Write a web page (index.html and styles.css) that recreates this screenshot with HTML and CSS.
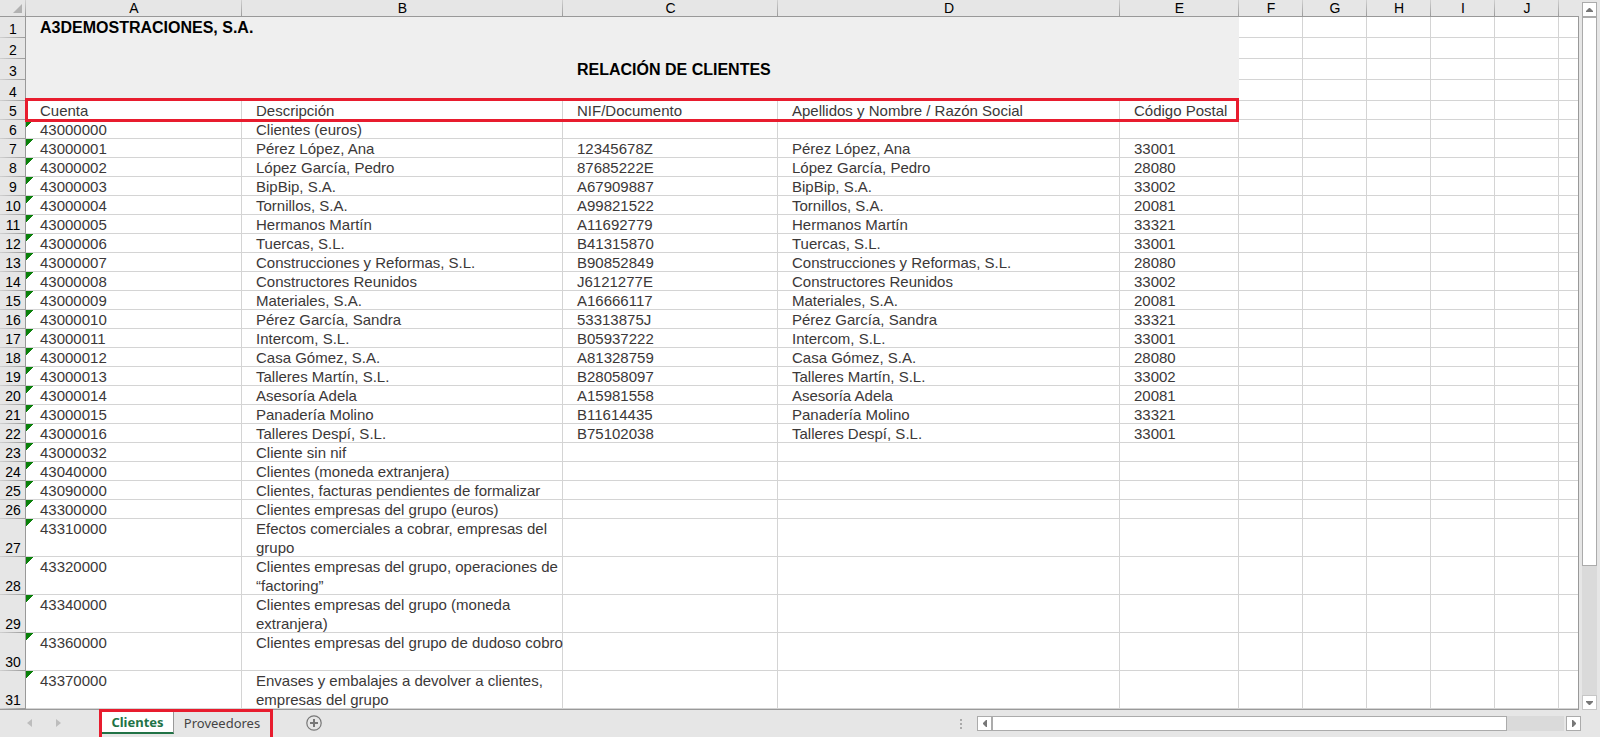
FILE: index.html
```html
<!DOCTYPE html>
<html lang="es">
<head>
<meta charset="utf-8">
<title>Relación de clientes</title>
<link rel="stylesheet" href="styles.css">
</head>
<body>
<main class="workspace">
  <div class="sheet">
    <table class="grid">
      <colgroup>
        <col class="col-num"><col class="col-a"><col class="col-b"><col class="col-c"><col class="col-d"><col class="col-e">
        <col class="col-s"><col class="col-s"><col class="col-s"><col class="col-s"><col class="col-s"><col>
      </colgroup>
      <thead>
        <tr>
          <th class="corner"><svg width="9" height="9" viewBox="0 0 9 9"><path d="M9 0V9H0Z" fill="#b2b2b2"/></svg></th>
          <th>A</th><th>B</th><th>C</th><th>D</th><th>E</th><th>F</th><th>G</th><th>H</th><th>I</th><th>J</th><th class="rest"></th>
        </tr>
      </thead>
      <tbody id="rows"></tbody>
    </table>
  </div>
  <div class="vscroll">
    <button class="arrow" aria-label="Subir"><svg width="7" height="4" viewBox="0 0 7 4"><path d="M3 0H4L7 3V4H0V3Z" fill="#777"/></svg></button>
    <div class="vtrack"><div class="vthumb"></div></div>
    <button class="arrow arrow-down" aria-label="Bajar"><svg width="7" height="4" viewBox="0 0 7 4"><path d="M0 0H7V1L4 4H3L0 1Z" fill="#777"/></svg></button>
  </div>
</main>
<footer class="bar">
  <div class="nav">
    <button class="plain" aria-label="Hoja anterior"><svg width="5" height="8" viewBox="0 0 5 8"><path d="M5 0V8L0 4Z" fill="#bdbdbd"/></svg></button>
    <button class="plain" aria-label="Hoja siguiente"><svg width="5" height="8" viewBox="0 0 5 8"><path d="M0 0V8L5 4Z" fill="#bdbdbd"/></svg></button>
  </div>
  <div class="tabs">
    <button class="tab active">Clientes</button>
    <button class="tab">Proveedores</button>
  </div>
  <button class="plain add" aria-label="Hoja nueva"><svg width="16" height="16" viewBox="0 0 16 16"><circle cx="8" cy="8" r="7.2" fill="none" stroke="#777" stroke-width="1.2"/><path d="M4 8H12M8 4V12" stroke="#777" stroke-width="2"/></svg></button>
  <div class="hscroll">
    <svg class="dots" width="2" height="10" viewBox="0 0 2 10"><path d="M0 0H2V2H0ZM0 4H2V6H0ZM0 8H2V10H0Z" fill="#aaa"/></svg>
    <button class="arrow" aria-label="Izquierda"><svg width="4" height="7" viewBox="0 0 4 7"><path d="M4 0V7H3L0 4V3L3 0Z" fill="#777"/></svg></button>
    <div class="htrack"><div class="hthumb"></div></div>
    <button class="arrow arrow-right" aria-label="Derecha"><svg width="4" height="7" viewBox="0 0 4 7"><path d="M0 0V7H1L4 4V3L1 0Z" fill="#777"/></svg></button>
  </div>
</footer>
<script src="rows.js"></script>
</body>
</html>
```
FILE: styles.css
```css
*, *::after { box-sizing: border-box; }
body {
  margin: 0;
  min-height: 100vh;
  display: flex;
  flex-direction: column;
  background: #e6e6e6;
  font-family: "Liberation Sans", Arial, sans-serif;
  overflow: hidden;
}
button { padding: 0; margin: 0; border: 0; background: none; font: inherit; }
svg { display: block; }

.workspace { flex: 1; display: flex; }
.sheet { flex: 1; min-width: 0; border-bottom: 1px solid #999; }

/* cell grid */
.grid { width: 100%; table-layout: fixed; border-collapse: separate; border-spacing: 0; }
.col-num { width: 26px; }
.col-a { width: 216px; }
.col-b { width: 321px; }
.col-c { width: 215px; }
.col-d { width: 342px; }
.col-e { width: 119px; }
.col-s { width: 64px; }

th { padding: 0; font-weight: 400; font-size: 14px; color: #000; }
thead th {
  height: 17px;
  line-height: 16px;
  vertical-align: top;
  background:
    linear-gradient(#999, #999) bottom / 100% 1px no-repeat,
    linear-gradient(#d0d0d0, #999) right / 1px 100% no-repeat,
    #e6e6e6;
}
thead th.rest { background: linear-gradient(#999, #999) bottom / 100% 1px no-repeat, #e6e6e6; }
.corner svg { margin: 4px 0 0 13px; }
tbody th {
  vertical-align: bottom;
  line-height: 17px;
  background:
    linear-gradient(#999, #999) right / 1px 100% no-repeat,
    linear-gradient(90deg, #d0d0d0, #999) bottom / 100% 1px no-repeat,
    #e6e6e6;
}
td {
  height: 19px;
  padding: 0 0 0 14px;
  vertical-align: top;
  font-size: 15px;
  line-height: 19px;
  color: #3b3838;
  background: #fff;
  box-shadow: inset -1px -1px #d4d4d4;
}
td:last-child { box-shadow: inset -1px 0 #999, inset 0 -1px #d4d4d4; }
.tall td { height: 38px; }
.single td { white-space: nowrap; }
.title td { height: 21px; line-height: 21px; }
.title td.band {
  background: #efefef;
  box-shadow: none;
  font-size: 16px;
  font-weight: 700;
  color: #000;
  white-space: nowrap;
}
td.flag { background: linear-gradient(135deg, #0a800a 5px, #fff 5px); }

/* frame around the field names, columns A to E */
.fields th { position: relative; }
.fields th::after {
  content: "";
  position: absolute;
  top: -3px;
  bottom: -2px;
  left: 25px;
  width: 1214px;
  border: 3px solid #e81c2e;
}

/* scroll bars */
.arrow {
  width: 15px;
  height: 15px;
  flex: none;
  display: flex;
  align-items: center;
  justify-content: center;
  background: #fff;
  border: 1px solid #ababab;
}
.vscroll { width: 21px; padding: 2px 3px 0; display: flex; flex-direction: column; }
.vtrack { flex: 1; background: #dadada; }
.vthumb { height: 81%; background: #fff; border: 1px solid #ababab; }
.arrow-down { border-color: #c6c6c6; }

/* sheet bar */
.bar { height: 27px; display: flex; }
.nav { width: 99px; padding: 0 0 2px 27px; display: flex; align-items: center; gap: 24px; }
.tabs {
  display: flex;
  flex: none;
  width: 174px;
  margin-top: -1px;
  border: 3px solid #e81c2e;
  border-bottom: 0;
  position: relative;
  font-family: "Noto Sans", sans-serif;
  font-size: 13px;
}
.tab { flex: 1; height: 22px; line-height: 20px; color: #444; }
.tab.active {
  flex: none;
  width: 72px;
  background: #fff;
  color: #217346;
  font-weight: 700;
  border-right: 1px solid #999;
  border-bottom: 2px solid #217346;
}
.add { margin-left: 33px; padding-bottom: 2px; }
.hscroll { flex: none; width: 40%; margin-left: auto; display: flex; align-items: center; padding-right: 19px; }
.dots { margin-right: 15px; }
.htrack { flex: 1; height: 15px; background: #dadada; margin-right: 2px; }
.hthumb { width: 90%; height: 15px; background: #fff; border: 1px solid #ababab; }
```
FILE: rows.js
```js
const people = [
  ["43000001", "Pérez López, Ana", "12345678Z", "33001"],
  ["43000002", "López García, Pedro", "87685222E", "28080"],
  ["43000003", "BipBip, S.A.", "A67909887", "33002"],
  ["43000004", "Tornillos, S.A.", "A99821522", "20081"],
  ["43000005", "Hermanos Martín", "A11692779", "33321"],
  ["43000006", "Tuercas, S.L.", "B41315870", "33001"],
  ["43000007", "Construcciones y Reformas, S.L.", "B90852849", "28080"],
  ["43000008", "Constructores Reunidos", "J6121277E", "33002"],
  ["43000009", "Materiales, S.A.", "A16666117", "20081"],
  ["43000010", "Pérez García, Sandra", "53313875J", "33321"],
  ["43000011", "Intercom, S.L.", "B05937222", "33001"],
  ["43000012", "Casa Gómez, S.A.", "A81328759", "28080"],
  ["43000013", "Talleres Martín, S.L.", "B28058097", "33002"],
  ["43000014", "Asesoría Adela", "A15981558", "20081"],
  ["43000015", "Panadería Molino", "B11614435", "33321"],
  ["43000016", "Talleres Despí, S.L.", "B75102038", "33001"]
];
const rows = [
  { kind: "title", cells: ["A3DEMOSTRACIONES, S.A."] },
  { kind: "title", cells: [] },
  { kind: "title", cells: ["", "", "RELACIÓN DE CLIENTES"] },
  { kind: "title", cells: [] },
  { kind: "fields", cells: ["Cuenta", "Descripción", "NIF/Documento", "Apellidos y Nombre / Razón Social", "Código Postal"] },
  { cells: ["43000000", "Clientes (euros)"] },
  ...people.map(([account, name, nif, zip]) => ({ cells: [account, name, nif, name, zip] })),
  { cells: ["43000032", "Cliente sin nif"] },
  { cells: ["43040000", "Clientes (moneda extranjera)"] },
  { cells: ["43090000", "Clientes, facturas pendientes de formalizar"] },
  { cells: ["43300000", "Clientes empresas del grupo (euros)"] },
  { kind: "tall", cells: ["43310000", "Efectos comerciales a cobrar, empresas del grupo"] },
  { kind: "tall", cells: ["43320000", "Clientes empresas del grupo, operaciones de “factoring”"] },
  { kind: "tall", cells: ["43340000", "Clientes empresas del grupo (moneda extranjera)"] },
  { kind: "tall single", cells: ["43360000", "Clientes empresas del grupo de dudoso cobro"] },
  { kind: "tall", cells: ["43370000", "Envases y embalajes a devolver a clientes, empresas del grupo"] }
];
const body = document.getElementById("rows");
rows.forEach((row, index) => {
  const tr = body.insertRow();
  if (row.kind) tr.className = row.kind;
  const th = document.createElement("th");
  th.scope = "row";
  th.textContent = index + 1;
  tr.append(th);
  for (let c = 0; c < 11; c++) {
    const td = tr.insertCell();
    td.textContent = row.cells[c] || "";
    if (row.kind === "title" && c < 5) td.className = "band";
    if (index > 4 && c === 0) td.className = "flag";
  }
});
```
